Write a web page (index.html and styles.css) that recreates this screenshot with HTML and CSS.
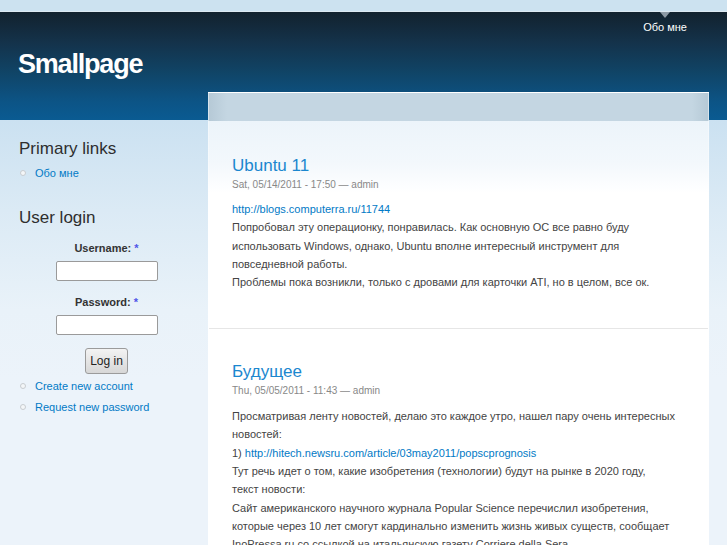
FILE: index.html
```html
<!DOCTYPE html>
<html lang="ru">
<head>
<meta charset="utf-8">
<title>Smallpage</title>
<link rel="stylesheet" href="styles.css">
</head>
<body>
<div class="topstrip"></div>
<header class="header">
  <h1 class="site-name">Smallpage</h1>
  <nav class="primary">
    <span class="tri"></span>
    <a href="#">Обо мне</a>
  </nav>
</header>
<div class="page">
  <aside class="sidebar">
    <section class="block">
      <h2 class="block-title">Primary links</h2>
      <ul class="menu">
        <li><a href="#">Обо мне</a></li>
      </ul>
    </section>
    <section class="block login">
      <h2 class="block-title">User login</h2>
      <form class="login-form">
        <label class="label">Username: <span class="req">*</span></label>
        <input class="text-input" type="text">
        <label class="label label-pass">Password: <span class="req">*</span></label>
        <input class="text-input" type="password">
        <button class="btn" type="button">Log in</button>
      </form>
      <ul class="menu menu-login">
        <li><a href="#">Create new account</a></li>
        <li><a href="#">Request new password</a></li>
      </ul>
    </section>
  </aside>
  <main class="main">
    <article class="node node-first">
      <h2 class="node-title"><a href="#">Ubuntu 11</a></h2>
      <div class="meta">Sat, 05/14/2011 - 17:50 — admin</div>
      <div class="content">
        <a href="#">http://blogs.computerra.ru/11744</a><br>
        Попробовал эту операционку, понравилась. Как основную ОС все равно буду использовать Windows, однако, Ubuntu вполне интересный инструмент для повседневной работы.<br>
        Проблемы пока возникли, только с дровами для карточки ATI, но в целом, все ок.
      </div>
    </article>
    <article class="node">
      <h2 class="node-title"><a href="#">Будущее</a></h2>
      <div class="meta">Thu, 05/05/2011 - 11:43 — admin</div>
      <div class="content">
        Просматривая ленту новостей, делаю это каждое утро, нашел пару очень интересных новостей:<br>
        1) <a href="#">http://hitech.newsru.com/article/03may2011/popscprognosis</a><br>
        Тут речь идет о том, какие изобретения (технологии) будут на рынке в 2020 году,<br>
        текст новости:<br>
        Сайт американского научного журнала Popular Science перечислил изобретения, которые через 10 лет смогут кардинально изменить жизнь живых существ, сообщает InoPressa.ru со ссылкой на итальянскую газету Corriere della Sera.
      </div>
    </article>
  </main>
</div>
</body>
</html>
```
FILE: styles.css
```css
html, body {
  margin: 0;
  padding: 0;
}
body {
  background: #ecf3fa;
  font-family: "Liberation Sans", Arial, sans-serif;
  font-size: 11px;
  color: #494949;
  overflow: hidden;
}
a {
  color: #027ac6;
  text-decoration: none;
}

.topstrip {
  height: 11px;
  background: #cce2f0;
  border-bottom: 1px solid #dde9f1;
}

.header {
  height: 108px;
  display: flex;
  justify-content: space-between;
  align-items: flex-start;
  padding: 0 40px 0 18px;
  background: linear-gradient(to bottom, #12222e 0, #14324a 30px, #104466 60px, #0c5486 90px, #0a5b92 108px);
}
.site-name {
  margin: 37px 0 0;
  font-size: 27px;
  line-height: 30px;
  letter-spacing: -1.2px;
  font-weight: bold;
  color: #fff;
}
.primary {
  display: flex;
  flex-direction: column;
  align-items: center;
}
.tri {
  width: 0;
  height: 0;
  border-left: 5px solid transparent;
  border-right: 5px solid transparent;
  border-top: 6px solid #8c99a4;
}
.primary a {
  color: #fff;
  font-size: 11px;
  line-height: 14px;
  margin-top: 2px;
}

.page {
  display: flex;
  align-items: flex-start;
  min-height: 425px;
  background: linear-gradient(to bottom, #cbe1f1 0, #dbeaf5 90px, #e9f2f9 190px, #ecf3fa 260px);
}

.sidebar {
  width: 208px;
  flex: none;
  box-sizing: border-box;
  padding: 18px 14px 0 19px;
}
.block-title {
  margin: 0;
  font-size: 17px;
  line-height: 22px;
  font-weight: normal;
  color: #2e2e2e;
}
.menu {
  list-style: none;
  margin: 4px 0 0;
  padding: 0;
}
.menu li {
  position: relative;
  padding-left: 16px;
  line-height: 18px;
  margin-bottom: 3px;
}
.menu li::before {
  content: "";
  position: absolute;
  left: 1px;
  top: 6px;
  width: 4px;
  height: 4px;
  border: 1px solid #c8ccd0;
  border-radius: 50%;
  background: #f4f6f8;
}
.login {
  margin-top: 25px;
}
.login-form {
  display: flex;
  flex-direction: column;
  align-items: center;
  margin-top: 10px;
}
.label {
  font-weight: bold;
  color: #333;
  line-height: 18px;
}
.label-pass {
  margin-top: 12px;
}
.req {
  color: #4f55e8;
}
.text-input {
  margin-top: 4px;
  width: 102px;
  height: 20px;
  box-sizing: border-box;
  border: 1px solid #9a9a9a;
  border-radius: 2px;
  background: #fff;
  padding: 0 3px;
}
.btn {
  margin-top: 13px;
  width: 43px;
  height: 26px;
  box-sizing: border-box;
  border: 1px solid #9b9b9b;
  border-radius: 3px;
  background: linear-gradient(to bottom, #f3f3f3, #d7d7d7);
  font-family: "Liberation Sans", Arial, sans-serif;
  font-size: 12px;
  color: #222;
  padding: 0;
}
.menu-login {
  margin-top: 3px;
}

.main {
  width: 501px;
  flex: none;
  margin-top: -28px;
  height: 453px;
  overflow: hidden;
  box-sizing: border-box;
  padding-top: 31px;
  border: 1px solid rgba(255, 255, 255, 0.35);
  border-bottom: none;
  background:
    linear-gradient(to right, rgba(80, 110, 130, 0.12), rgba(80, 110, 130, 0) 18px, rgba(80, 110, 130, 0) 483px, rgba(80, 110, 130, 0.12)) 0 0 / 100% 28px no-repeat,
    linear-gradient(to bottom, #c4d6e2 0, #c4d6e2 28px, #ecf4fa 28px, #f3f8fc 70px, #fdfeff 95px, #fff 100px);
}
.node {
  padding: 31px 26px 36px 23px;
  border-bottom: 1px solid #e6e6e6;
}
.node + .node {
  padding-top: 32px;
  border-bottom: none;
}
.node-title {
  margin: 0;
  font-size: 17px;
  line-height: 22px;
  font-weight: normal;
}
.node-title a {
  color: #1b87cf;
}
.meta {
  margin-top: 1px;
  font-size: 10px;
  line-height: 14px;
  color: #888;
}
.content {
  margin-top: 8px;
  line-height: 18.36px;
  color: #444;
}
.node + .node .content {
  margin-top: 9px;
}
```
